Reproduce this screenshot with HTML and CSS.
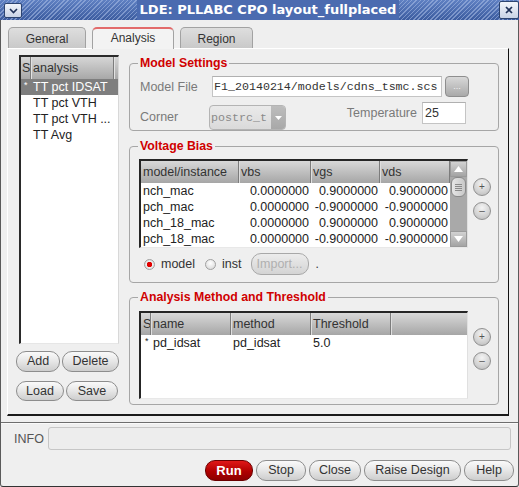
FILE: index.html
```html
<!DOCTYPE html>
<html>
<head>
<meta charset="utf-8">
<link rel="stylesheet" href="styles.css">
</head>
<body>
<div class="window">
  <div class="titlebar">
    <span class="tb-btn menu-btn"><svg width="9" height="6" viewBox="0 0 9 6"><path d="M1 1 L4.5 4.5 L8 1" fill="none" stroke="#1f3158" stroke-width="1.6"/></svg></span>
    <div class="title-wrap"><span class="title">LDE: PLLABC CPO layout_fullplaced</span></div>
    <span class="tb-btn close-btn"><svg width="8" height="8" viewBox="0 0 8 8"><path d="M1 1 L7 7 M7 1 L1 7" stroke="#1f3158" stroke-width="1.7"/></svg></span>
  </div>
  <div class="frame">
    <div class="tabs">
      <div class="tab t-general">General</div>
      <div class="tab t-analysis active">Analysis</div>
      <div class="tab t-region">Region</div>
    </div>
    <div class="panel">
      <div class="left-col">
        <div class="list">
          <div class="list-head"><span class="lc-s">S</span><span class="lc-a">analysis</span><span class="lc-r"></span></div>
          <div class="list-row sel"><span class="lc-s"><span class="star">*</span></span><span class="lc-t">TT pct IDSAT</span></div>
          <div class="list-row"><span class="lc-s"></span><span class="lc-t">TT pct VTH</span></div>
          <div class="list-row"><span class="lc-s"></span><span class="lc-t">TT pct VTH ...</span></div>
          <div class="list-row"><span class="lc-s"></span><span class="lc-t">TT Avg</span></div>
        </div>
        <div class="btn-row r1"><button class="pill b-add">Add</button><button class="pill b-del">Delete</button></div>
        <div class="btn-row r2"><button class="pill b-load">Load</button><button class="pill b-save">Save</button></div>
      </div>
      <div class="right-col">
        <fieldset class="group g-model">
          <legend>Model Settings</legend>
          <div class="ms-row1">
            <span class="lbl lbl-file">Model File</span>
            <div class="field file-field">F1_20140214/models/cdns_tsmc.scs</div>
            <button class="dots-btn">...</button>
          </div>
          <div class="ms-row2">
            <span class="lbl lbl-corner">Corner</span>
            <div class="combo"><span class="combo-text">postrc_t</span><span class="combo-arrow"><svg width="7" height="4" viewBox="0 0 7 4"><path d="M0 0 H7 L3.5 4 Z" fill="#fff"/></svg></span></div>
            <div class="temp">
              <span class="lbl">Temperature</span>
              <div class="field temp-field">25</div>
            </div>
          </div>
        </fieldset>

        <fieldset class="group g-bias">
          <legend>Voltage Bias</legend>
          <div class="tbl-row">
            <div class="tbl vtable">
              <div class="vt-main">
                <div class="th-row vt-cols">
                  <span class="th">model/instance</span><span class="th">vbs</span><span class="th">vgs</span><span class="th">vds</span>
                </div>
                <div class="td-row vt-cols"><span class="td">nch_mac</span><span class="td num">0.0000000</span><span class="td num">0.9000000</span><span class="td num">0.9000000</span></div>
                <div class="td-row vt-cols"><span class="td">pch_mac</span><span class="td num">0.0000000</span><span class="td num">-0.9000000</span><span class="td num">-0.9000000</span></div>
                <div class="td-row vt-cols"><span class="td">nch_18_mac</span><span class="td num">0.0000000</span><span class="td num">0.9000000</span><span class="td num">0.9000000</span></div>
                <div class="td-row vt-cols"><span class="td">pch_18_mac</span><span class="td num">0.0000000</span><span class="td num">-0.9000000</span><span class="td num">-0.9000000</span></div>
              </div>
              <div class="scrollbar">
                <div class="sb-btn"><svg width="9" height="6" viewBox="0 0 9 6"><path d="M0 6 H9 L4.5 0 Z" fill="#fff"/></svg></div>
                <div class="sb-thumb"><span></span><span></span><span></span><span></span></div>
                <div class="sb-track"></div>
                <div class="sb-btn"><svg width="9" height="6" viewBox="0 0 9 6"><path d="M0 0 H9 L4.5 6 Z" fill="#fff"/></svg></div>
              </div>
            </div>
            <div class="side-btns sb-bias">
              <button class="round">+</button>
              <button class="round">&#8211;</button>
            </div>
          </div>
          <div class="radio-row">
            <span class="radio on"></span><span class="rlabel">model</span>
            <span class="radio"></span><span class="rlabel">inst</span>
            <button class="pill import" disabled>Import...</button>
            <span class="dot">.</span>
          </div>
        </fieldset>

        <fieldset class="group g-method">
          <legend>Analysis Method and Threshold</legend>
          <div class="tbl-row">
            <div class="tbl mtable">
              <div class="th-row mt-cols"><span class="th">S</span><span class="th">name</span><span class="th">method</span><span class="th">Threshold</span><span class="th"></span></div>
              <div class="td-row mt-cols"><span class="td"><span class="star">*</span></span><span class="td">pd_idsat</span><span class="td">pd_idsat</span><span class="td">5.0</span><span class="td"></span></div>
            </div>
            <div class="side-btns sb-method">
              <button class="round">+</button>
              <button class="round">&#8211;</button>
            </div>
          </div>
        </fieldset>
      </div>
    </div>
    <div class="sep"></div>
    <div class="info-row">
      <span class="info-lbl">INFO</span>
      <div class="info-box"></div>
    </div>
    <div class="actions">
      <button class="pill run">Run</button>
      <button class="pill a-stop">Stop</button>
      <button class="pill a-close">Close</button>
      <button class="pill a-raise">Raise Design</button>
      <button class="pill a-help">Help</button>
    </div>
  </div>
</div>
</body>
</html>
```

FILE: styles.css
```css
* { box-sizing: border-box; }
html, body { margin: 0; padding: 0; }
body {
  background: #efefef;
  font-family: "Liberation Sans", Arial, sans-serif;
  font-size: 12px;
  color: #2c2c2c;
}
button { font-family: inherit; font-size: 12px; margin: 0; padding: 0; }

.window {
  width: 519px;
  height: 487px;
  display: flex;
  flex-direction: column;
  background: #efefef;
  overflow: hidden;
}

/* title bar */
.titlebar {
  height: 20px;
  flex: none;
  display: flex;
  align-items: flex-start;
  background:
    repeating-linear-gradient(135deg, rgba(170,190,230,0.55) 0 1px, transparent 1px 3px),
    linear-gradient(#5f80c2, #3c5c9f);
}
.tb-btn {
  flex: none;
  display: flex;
  align-items: center;
  justify-content: center;
  background: linear-gradient(#f2f5fb, #c9d3e6);
  border: 1px solid #2d4470;
  border-radius: 2px;
}
.menu-btn { width: 18px; height: 15px; margin: 3px 0 0 4px; }
.close-btn { width: 20px; height: 18px; margin: 1px 0 0 0; }
.title-wrap {
  flex: 1;
  display: flex;
  justify-content: center;
  padding-left: 15px;
}
.title {
  background: #4b6bb0;
  color: #fff;
  font-family: "DejaVu Sans", sans-serif;
  font-weight: bold;
  font-size: 13px;
  line-height: 20px;
  padding: 0 3px;
}

/* frame */
.frame {
  flex: 1;
  display: flex;
  flex-direction: column;
  border-left: 1px solid #5a5a5a;
  border-right: 1px solid #5a5a5a;
  border-bottom: 1px solid #333;
  border-radius: 0 0 3px 3px;
}

/* tabs */
.tabs {
  display: flex;
  gap: 6px;
  margin: 7px 0 0 7px;
  height: 21px;
}
.tab {
  height: 21px;
  border: 1px solid #a2a2a2;
  border-bottom: none;
  border-radius: 5px 5px 0 0;
  background: linear-gradient(#dedede, #c9c9c9);
  color: #333;
  text-align: center;
  font-size: 12px;
  line-height: 20px;
  padding-top: 1px;
}
.t-general { width: 78px; }
.t-analysis { width: 82px; }
.t-region { width: 73px; }
.tab.active {
  background: #f3f3f3;
  border-top: 2px solid #e26a6a;
  padding-top: 0;
  line-height: 19px;
  position: relative;
  z-index: 1;
  height: 22px;
}

/* panel */
.panel {
  margin-left: 6px;
  width: 502px;
  height: 368px;
  flex: none;
  display: flex;
  border-top: 1px solid #fff;
  border-left: 1px solid #fff;
  border-right: 1px solid #111;
  border-bottom: 2px solid #1a1a1a;
}

.left-col {
  width: 121px;
  flex: none;
  padding: 6px 0 0 8px;
}
.list {
  margin-left: 3px;
  width: 100px;
  height: 289px;
  background: #fff;
  border-top: 2px solid #2a2a2a;
  border-left: 2px solid #2a2a2a;
  border-right: 1px solid #d8d8d8;
  border-bottom: 1px solid #e6e6e6;
}
.list-head {
  height: 22px;
  display: flex;
  background: linear-gradient(#d6d6d6, #a8a8a8);
  color: #333;
  line-height: 22px;
  font-size: 12.5px;
}
.list-head span { border-right: 1px solid #7c7c7c; box-shadow: 1px 0 0 #e2e2e2; }
.lc-s { width: 10px; flex: none; padding-left: 1px; }
.lc-a { width: 83px; flex: none; padding-left: 2px; }
.lc-r { flex: 1; border-right: none !important; box-shadow: none !important; }
.list-row {
  height: 16px;
  display: flex;
  line-height: 16px;
  font-size: 12.5px;
  color: #222;
}
.list-row .lc-t { padding-left: 2px; }
.list-row.sel { background: #7e7e7e; color: #fff; }
.star { font-size: 9px; line-height: 10px; vertical-align: top; display: inline-block; padding: 1px 0 0 2px; }

.btn-row { display: flex; gap: 2px; }
.btn-row.r1 { margin-top: 7px; }
.btn-row.r2 { margin-top: 9px; }
.pill {
  height: 21px;
  border: 1px solid #8d8d8d;
  border-radius: 10px;
  background: linear-gradient(#fafafa, #e6e6e6 50%, #cdcdcd);
  color: #333;
  font-size: 12.5px;
  line-height: 19px;
  text-align: center;
}
.b-add { width: 44px; }
.b-del { width: 57px; }
.b-load { width: 48px; height: 20px; }
.b-save { width: 52px; height: 20px; }

/* right column */
.right-col {
  width: 370px;
  flex: none;
  padding-top: 7px;
}
.group {
  margin: 0;
  padding: 0;
  border: 1px solid #a6a6a6;
  border-radius: 4px;
  min-width: 0;
}
.group legend {
  margin-left: 8px;
  padding: 0 2px;
  line-height: 14px;
  font-size: 12.3px;
  font-weight: bold;
  color: #d00000;
}
.g-bias { margin-top: 8px; padding-bottom: 7px; }
.g-method { margin-top: 7px; padding-bottom: 5px; }

.lbl { color: #7a7a7a; font-size: 12.5px; }
.ms-row1 {
  margin-top: 6px;
  padding-left: 10px;
  display: flex;
  align-items: center;
}
.lbl-file { width: 72px; flex: none; }
.field {
  background: #fff;
  border: 1px solid #c4c4c4;
  border-top-color: #b0b0b0;
  height: 21px;
  line-height: 19px;
}
.file-field {
  width: 230px;
  font-family: "Liberation Mono", monospace;
  font-size: 11.65px;
  color: #333;
  padding-left: 1px;
  white-space: nowrap;
  overflow: hidden;
}
.dots-btn {
  margin-left: 3px;
  width: 24px;
  height: 21px;
  border: 1px solid #8e8e8e;
  border-radius: 4px;
  background: linear-gradient(#d8d8d8, #a9a9a9);
  color: #f4f4f4;
  font-size: 9px;
  line-height: 17px;
}
.ms-row2 {
  margin-top: 5px;
  padding-left: 10px;
  display: flex;
  align-items: flex-start;
  height: 28px;
}
.lbl-corner { width: 69px; flex: none; margin-top: 8px; }
.combo {
  margin-top: 3px;
  width: 77px;
  height: 25px;
  display: flex;
  border: 1px solid #b4b4b4;
  border-radius: 4px;
  background: linear-gradient(#eaeaea, #dadada);
  overflow: hidden;
}
.combo-text {
  width: 61px;
  flex: none;
  white-space: nowrap;
  font-family: "Liberation Mono", monospace;
  font-size: 11.65px;
  color: #8a8a8a;
  line-height: 23px;
  padding-left: 1px;
}
.combo-arrow {
  flex: 1;
  background: linear-gradient(#bdbdbd, #a8a8a8);
  display: flex;
  align-items: center;
  justify-content: center;
}
.temp {
  margin-left: auto;
  margin-right: 32px;
  display: flex;
  align-items: center;
  gap: 5px;
}
.temp-field {
  width: 44px;
  height: 22px;
  line-height: 20px;
  padding-left: 2px;
  font-size: 12.5px;
  color: #333;
}

/* tables */
.tbl-row { display: flex; align-items: flex-start; }
.tbl {
  margin-left: 9px;
  width: 329px;
  background: #fff;
  border-top: 2px solid #252525;
  border-left: 2px solid #252525;
  border-right: 1px solid #e0e0e0;
  border-bottom: 1px solid #e8e8e8;
}
.vtable { margin-top: 6px; height: 89px; display: flex; }
.mtable { margin-top: 7px; height: 88px; }
.vt-main { width: 309px; flex: none; }
.vt-cols { display: grid; grid-template-columns: 98px 72px 69px 70px; }
.mt-cols { display: grid; grid-template-columns: 10px 80px 80px 80px 76px; }
.th-row {
  height: 22px;
  background: linear-gradient(#d8d8d8, #a6a6a6);
  line-height: 22px;
  font-size: 12.5px;
  color: #333;
}
.th {
  padding-left: 2px;
  border-right: 1px solid #7c7c7c;
  box-shadow: inset 1px 0 0 #dedede;
  white-space: nowrap;
  overflow: hidden;
}
.th:first-child { box-shadow: none; }
.th:last-child { border-right: none; }
.vt-cols .th:last-child { border-right: 1px solid #7c7c7c; }
.td-row { height: 16px; line-height: 16px; font-size: 12.5px; color: #222; }
.td { padding-left: 2px; white-space: nowrap; overflow: hidden; }
.td.num { text-align: right; padding-right: 2px; padding-left: 0; }

.scrollbar {
  flex: 1;
  display: flex;
  flex-direction: column;
  background: #a9a9a9;
}
.sb-btn {
  height: 16px;
  flex: none;
  background: linear-gradient(#d2d2d2, #a4a4a4);
  border: 1px solid #9a9a9a;
  display: flex;
  align-items: center;
  justify-content: center;
}
.sb-thumb {
  height: 20px;
  flex: none;
  margin: 0 1px;
  border: 1px solid #8a8a8a;
  border-radius: 6px;
  background: linear-gradient(90deg, #e6e6e6, #c8c8c8);
  display: flex;
  flex-direction: column;
  align-items: center;
  justify-content: center;
  gap: 1px;
}
.sb-thumb span { width: 7px; height: 1px; background: #8a8a8a; }
.sb-track { flex: 1; }

.side-btns {
  margin-left: 5px;
  display: flex;
  flex-direction: column;
  gap: 6px;
}
.sb-bias { padding-top: 25px; }
.sb-method { padding-top: 24px; }
.round {
  width: 18px;
  height: 18px;
  border-radius: 50%;
  border: 1px solid #909090;
  background: radial-gradient(circle at 50% 30%, #f4f4f4, #d2d2d2 60%, #b8b8b8);
  color: #555;
  font-size: 10px;
  line-height: 16px;
  text-align: center;
}

.radio-row {
  margin-top: 5px;
  height: 22px;
  display: flex;
  align-items: center;
  padding-left: 14px;
}
.radio {
  width: 11px;
  height: 11px;
  border-radius: 50%;
  border: 1px solid #a0a0a0;
  background: radial-gradient(circle at 50% 35%, #ffffff, #d4d4d4);
  flex: none;
}
.radio.on { background: radial-gradient(circle, #e00000 0 2.5px, #f0f0f0 3px, #c8c8c8); }
.rlabel { font-size: 12.5px; color: #333; margin-left: 6px; margin-right: 10px; }
.import {
  margin-left: -1px;
  width: 58px;
  height: 22px;
  color: #b0b0b0;
  background: linear-gradient(#ececec, #d4d4d4);
  border-color: #a8a8a8;
}
.dot { margin-left: 7px; color: #333; }

/* bottom */
.sep {
  margin-top: 6px;
  height: 2px;
  border-top: 1px solid #6e6e6e;
  border-bottom: 1px solid #fafafa;
}
.info-row {
  margin-top: 3px;
  height: 23px;
  display: flex;
  align-items: center;
}
.info-lbl { width: 47px; padding-left: 13px; color: #555; font-size: 12.5px; }
.info-box {
  width: 463px;
  height: 23px;
  border: 1px solid #c6c6c6;
  border-radius: 3px;
  background: #ededed;
}
.actions {
  margin-top: 10px;
  display: flex;
  justify-content: flex-end;
  gap: 3px;
  padding-right: 4px;
}
.actions .pill { height: 21px; }
.run {
  width: 48px;
  background: linear-gradient(#e01818, #b00000 55%, #8c0000);
  border-color: #6a0000;
  color: #fff;
  font-weight: bold;
  font-size: 13px;
}
.a-stop { width: 50px; }
.a-close { width: 52px; }
.a-raise { width: 97px; }
.a-help { width: 50px; }
```
